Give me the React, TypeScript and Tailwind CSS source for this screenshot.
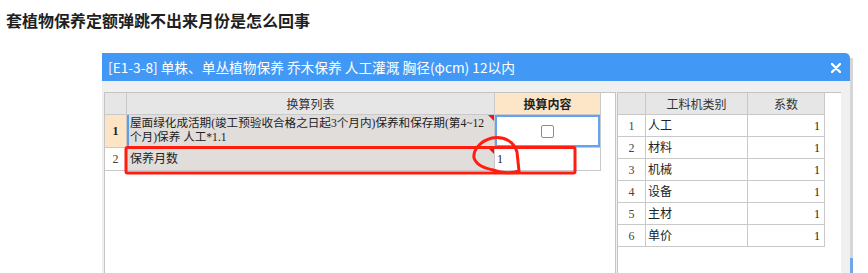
import React from "react";

const cell = "border-r border-b border-[#c9c9c9] flex items-center";

function Tri() {
  return (
    <span className="absolute top-0 right-0 w-0 h-0 border-l-[6px] border-l-transparent border-t-[6px] border-t-[#e8141b]" />
  );
}

const rows = ["人工", "材料", "机械", "设备", "主材", "单价"];

export default function App() {
  return (
    <div className="relative w-[868px] h-[273px] overflow-hidden bg-white font-['Noto_Sans_CJK_SC','Noto_Sans',sans-serif]">
      <h1 className="h-[53px] pl-[6px] pt-[8px] text-[16px] leading-[24px] font-bold text-[#1f1f1f]">
        套植物保养定额弹跳不出来月份是怎么回事
      </h1>
      <div className="flex ml-[102px] h-[220px]">
        <div className="w-[748px] flex flex-col">
          <div className="h-[28px] shrink-0 bg-[#4299f5] rounded-tr-[5px] flex items-center justify-between pl-[6px] pr-[9px]">
            <span className="text-white text-[13.7px] leading-[20px] whitespace-nowrap">
              [E1-3-8] 单株、单丛植物保养 乔木保养 人工灌溉 胸径(φcm) 12以内
            </span>
            <svg width="10" height="10" viewBox="0 0 10 10" className="mt-[1px]">
              <path d="M1 1 L9 9 M9 1 L1 9" stroke="white" strokeWidth="2.4" strokeLinecap="round" />
            </svg>
          </div>
          <div className="flex-1 bg-[#f0f0f0] pt-[11px] pl-[2px] flex gap-[1px] text-[12px] text-[#222]">
            <div className="w-[512px] bg-white border-l border-t border-r border-[#c4c4c4]">
              <div className="grid grid-cols-[22px_368px_106px] grid-rows-[22px_33px_23px] font-['Liberation_Serif','Noto_Sans_CJK_SC',serif]">
                <div className={`${cell} bg-[#e6e6e6]`} />
                <div className={`${cell} bg-[#e6e6e6] justify-center font-['Noto_Sans_CJK_SC',sans-serif] text-[#333]`}>换算列表</div>
                <div className={`${cell} bg-[#fde5c8] justify-center font-bold font-['Noto_Sans_CJK_SC',sans-serif]`}>换算内容</div>

                <div className={`${cell} bg-[#fde4c5] justify-center font-bold`}>1</div>
                <div className={`${cell} relative bg-[#e1dddb] pl-[3px] shadow-[inset_2px_0_0_#5a9ef0] text-[11.6px] leading-[14px] whitespace-nowrap`}>
                  <span>
                    屋面绿化成活期(竣工预验收合格之日起3个月内)保养和保存期(第4~12
                    <br />
                    个月)保养 人工*1.1
                  </span>
                  <Tri />
                </div>
                <div className={`${cell} bg-white justify-center shadow-[inset_0_0_0_2px_#62a4f2]`}>
                  <span className="w-[13px] h-[13px] border border-[#8c8c8c] rounded-[2px] bg-white" />
                </div>

                <div className={`${cell} bg-white justify-center text-[#444]`}>2</div>
                <div className={`${cell} relative bg-[#e1dddb] pl-[3px]`}>
                  保养月数
                  <Tri />
                </div>
                <div className={`${cell} bg-white pl-[2px]`}>1</div>
              </div>
            </div>
            <div className="w-[224px] bg-white border-l border-t border-[#c4c4c4]">
              <div className="grid grid-cols-[28px_102px_77px] auto-rows-[22px] font-['Liberation_Serif','Noto_Sans_CJK_SC',serif]">
                <div className={`${cell} bg-[#e6e6e6]`} />
                <div className={`${cell} bg-[#e6e6e6] justify-center font-['Noto_Sans_CJK_SC',sans-serif] text-[#333]`}>工料机类别</div>
                <div className={`${cell} bg-[#e6e6e6] justify-center font-['Noto_Sans_CJK_SC',sans-serif] text-[#333]`}>系数</div>
                {rows.map((r, i) => (
                  <React.Fragment key={r}>
                    <div className={`${cell} justify-center text-[#444]`}>{i + 1}</div>
                    <div className={`${cell} pl-[2px]`}>{r}</div>
                    <div className={`${cell} justify-end pr-[4px]`}>1</div>
                  </React.Fragment>
                ))}
              </div>
            </div>
          </div>
        </div>
        <div className="w-[3px] mt-[5px] flex flex-col">
          <div className="flex-1 bg-[#d6d6d6]" />
          <div className="h-[15px] bg-[#6ea9e6]" />
        </div>
      </div>
      <svg className="absolute left-0 top-0 pointer-events-none" width="868" height="273">
        <rect x="126" y="147.5" width="449" height="25.5" rx="1.5" fill="none" stroke="#ff1d10" strokeWidth="3" />
        <path
          d="M492 138 C505 136 514 142 517 152 L519 171 C512 174 500 173 493 170 C485 168 477 166 474 158 C473 150 480 141 492 138 Z"
          fill="none"
          stroke="#ff1d10"
          strokeWidth="3"
        />
      </svg>
    </div>
  );
}
